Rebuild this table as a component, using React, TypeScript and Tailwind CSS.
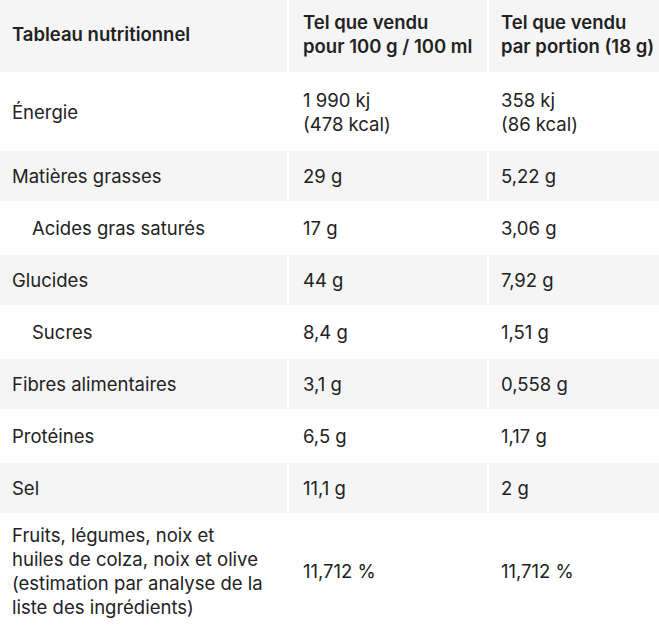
import React from "react";

type Row = { label: React.ReactNode; a: React.ReactNode; b: React.ReactNode; indent?: boolean; h: string };

const rows: Row[] = [
  { label: "Énergie", a: <>1 990 kj<br />(478 kcal)</>, b: <>358 kj<br />(86 kcal)</>, h: "h-[75px]" },
  { label: "Matières grasses", a: "29 g", b: "5,22 g", h: "h-[50px]" },
  { label: "Acides gras saturés", a: "17 g", b: "3,06 g", indent: true, h: "h-[50px]" },
  { label: "Glucides", a: "44 g", b: "7,92 g", h: "h-[50px]" },
  { label: "Sucres", a: "8,4 g", b: "1,51 g", indent: true, h: "h-[50px]" },
  { label: "Fibres alimentaires", a: "3,1 g", b: "0,558 g", h: "h-[50px]" },
  { label: "Protéines", a: "6,5 g", b: "1,17 g", h: "h-[50px]" },
  { label: "Sel", a: "11,1 g", b: "2 g", h: "h-[50px]" },
  {
    label: <>Fruits, légumes, noix et<br />huiles de colza, noix et olive<br />(estimation par analyse de la<br />liste des ingrédients)</>,
    a: "11,712 %",
    b: "11,712 %",
    h: "h-[112px]",
  },
];

export default function App() {
  return (
    <div
      className="w-[659px] h-[627px] overflow-hidden bg-white text-[#222222] text-[18.5px] leading-[24px]"
      style={{ fontFamily: "Inter, 'Noto Sans', sans-serif" }}
    >
      <div className="grid grid-cols-[287px_198px_170px] gap-x-[2px] gap-y-[2px]">
        <div className="h-[72px] bg-[#f5f5f5] pl-3 pb-[5px] flex items-center font-semibold">Tableau nutritionnel</div>
        <div className="h-[72px] bg-[#f5f5f5] pl-[14px] pb-[4px] flex items-center font-semibold">
          <span>Tel que vendu<br />pour 100 g / 100 ml</span>
        </div>
        <div className="h-[72px] bg-[#f5f5f5] pl-3 pb-[4px] flex items-center font-semibold">
          <span>Tel que vendu<br />par portion (18 g)</span>
        </div>
        {rows.map((r, i) => {
          const bg = i % 2 === 1 ? "bg-[#f5f5f5]" : "bg-white";
          return (
            <React.Fragment key={i}>
              <div className={`${r.h} ${bg} ${r.indent ? "pl-8" : "pl-3"} flex items-center`}>
                <span>{r.label}</span>
              </div>
              <div className={`${r.h} ${bg} pl-[14px] flex items-center`}>
                <span>{r.a}</span>
              </div>
              <div className={`${r.h} ${bg} pl-3 flex items-center`}>
                <span>{r.b}</span>
              </div>
            </React.Fragment>
          );
        })}
      </div>
    </div>
  );
}
